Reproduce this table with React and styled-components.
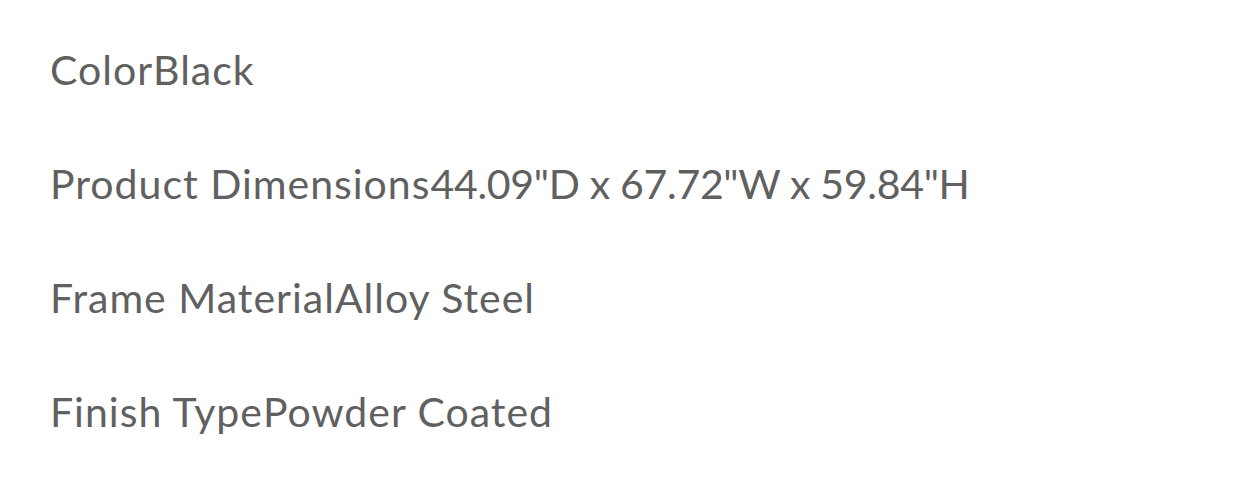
import React from "react";
import styled, { createGlobalStyle } from "styled-components";

const Global = createGlobalStyle`
  html, body { margin: 0; padding: 0; background: #ffffff; }
  body { font-family: "Lato", "Noto Sans", sans-serif; }
`;

const List = styled.dl`
  margin: 0;
  padding: 46px 0 0 50px;
  display: flex;
  flex-direction: column;
  gap: 66px;
`;

const Row = styled.div`
  display: flex;
  font-size: 41px;
  line-height: 48px;
  color: #606060;
  white-space: nowrap;
`;

const Label = styled.dt`
  margin: 0;
  letter-spacing: 1px;
`;

const Value = styled.dd`
  margin: 0;
  letter-spacing: ${(p) => (p.$numeric ? "-0.3px" : "1px")};
`;

const specs = [
  { label: "Color", value: "Black" },
  { label: "Product Dimensions", value: "44.09\"D x 67.72\"W x 59.84\"H", numeric: true },
  { label: "Frame Material", value: "Alloy Steel" },
  { label: "Finish Type", value: "Powder Coated" },
];

export default function App() {
  return (
    <>
      <Global />
      <List>
        {specs.map((s) => (
          <Row key={s.label}>
            <Label>{s.label}</Label>
            <Value $numeric={s.numeric}>{s.value}</Value>
          </Row>
        ))}
      </List>
    </>
  );
}
